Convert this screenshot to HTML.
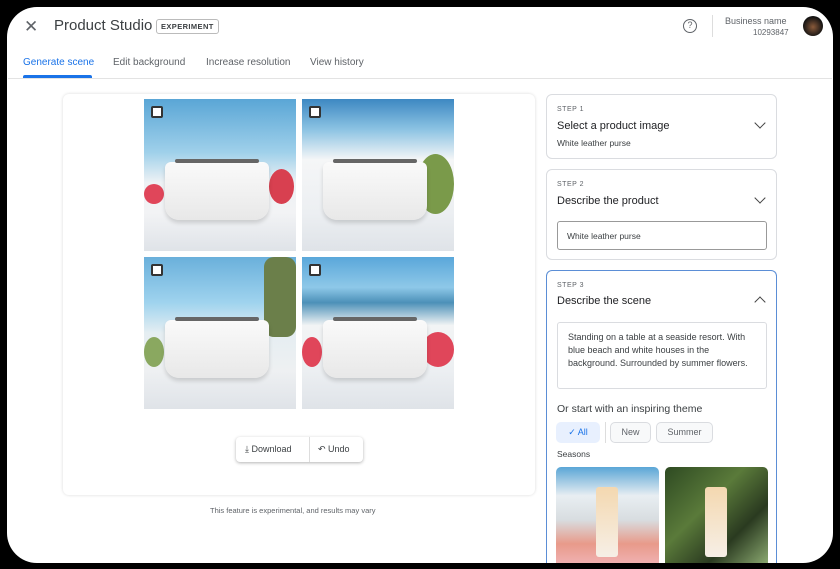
<!DOCTYPE html>
<html><head><style>
*{box-sizing:border-box;margin:0;padding:0}
html,body{width:840px;height:569px;overflow:hidden}
body{background:#000;font-family:"Liberation Sans",Arial,sans-serif;position:relative}
.scr{position:absolute;left:7px;top:7px;width:826px;height:556px;background:#fff;border-radius:30px;overflow:hidden}
.a{position:absolute}
.tab{position:absolute;top:57px;font-size:10px;color:#5f6368}
.tile{position:absolute;width:152px;height:152px;overflow:hidden;background:linear-gradient(#5aa6d6 0%,#9fd0ea 35%,#eef2f5 55%,#f2f3f5 75%,#dfe3e8 100%)}
.purse{position:absolute;left:21px;top:63px;width:104px;height:58px;background:linear-gradient(#fafafa,#e8e8e8);border-radius:6px 6px 14px 14px;box-shadow:0 3px 4px rgba(0,0,0,.15)}
.purse:before{content:"";position:absolute;left:10px;right:10px;top:-3px;height:4px;background:#666;border-radius:2px}
.cb{position:absolute;left:7px;top:7px;width:12px;height:12px;border:2px solid #333;background:#fff;border-radius:2px}
.fl{position:absolute;border-radius:50%;background:#e0465a}
.card{position:absolute;left:546px;width:231px;border:1px solid #dadce0;border-radius:6px;background:#fff}
.step{position:absolute;left:10px;font-size:7px;letter-spacing:.5px;color:#5f6368}
.ttl{position:absolute;left:10px;font-size:11px;color:#202124}
.chev{position:absolute;right:12px;width:8px;height:8px;border-right:1.5px solid #444;border-bottom:1.5px solid #444}
.chip{position:absolute;top:422px;height:21px;border:1px solid #dadce0;border-radius:5px;font-size:9px;color:#5f6368;text-align:center;line-height:19px;background:#f8f9fa}
</style></head><body>
<div class="scr"></div>
<div class="a" style="left:24px;top:17px;font-size:17px;color:#5f6368">✕</div>
<div class="a" style="left:54px;top:17px;font-size:15px;color:#3c4043">Product Studio</div>
<div class="a" style="left:156px;top:19px;border:1px solid #bbb;border-radius:3px;font-size:7.5px;font-weight:bold;padding:2px 4px;color:#3c4043;letter-spacing:.4px">EXPERIMENT</div>
<div class="tab" style="left:23px;color:#1a73e8">Generate scene</div>
<div class="tab" style="left:113px">Edit background</div>
<div class="tab" style="left:206px">Increase resolution</div>
<div class="tab" style="left:310px">View history</div>
<div class="a" style="left:23px;top:75px;width:69px;height:3px;background:#1a73e8;border-radius:2px 2px 0 0"></div>
<div class="a" style="left:8px;top:78px;width:824px;height:1px;background:#e3e3e3"></div>
<div class="a" style="left:683px;top:19px;width:14px;height:14px;border:1.5px solid #5f6368;border-radius:50%;font-size:9px;text-align:center;line-height:11px;color:#5f6368">?</div>
<div class="a" style="left:712px;top:15px;width:1px;height:22px;background:#ddd"></div>
<div class="a" style="left:725px;top:16px;font-size:9px;color:#5f6368">Business name</div>
<div class="a" style="left:753px;top:28px;font-size:8px;color:#5f6368">10293847</div>
<div class="a" style="left:803px;top:16px;width:20px;height:20px;border-radius:50%;background:radial-gradient(circle at 50% 55%,#8a5a3a 0,#3a2a20 45%,#111 70%)"></div>

<div class="a" style="left:63px;top:94px;width:472px;height:401px;border-radius:6px;box-shadow:0 0 3px rgba(0,0,0,.15)"></div>
<div class="tile" style="left:144px;top:99px"><div class="fl" style="left:0;top:85px;width:20px;height:20px"></div><div class="fl" style="left:125px;top:70px;width:25px;height:35px;background:#d84050"></div><div class="purse"></div><div class="cb"></div></div>
<div class="tile" style="left:302px;top:99px;background:linear-gradient(#3d88c2 0%,#8cc3e3 20%,#f5f6f7 40%,#eceff2 75%,#dfe3e8 100%)"><div class="fl" style="left:115px;top:55px;width:37px;height:60px;background:#7a9a4a"></div><div class="purse"></div><div class="cb"></div></div>
<div class="tile" style="left:144px;top:257px;background:linear-gradient(#6ab0db 0%,#9fd3ee 30%,#e5eef2 50%,#eef0f2 75%,#dfe3e8 100%)"><div class="fl" style="left:0;top:80px;width:20px;height:30px;background:#8aa860"></div><div class="fl" style="left:120px;top:0;width:32px;height:80px;background:#6b7f4a;border-radius:10px"></div><div class="purse"></div><div class="cb"></div></div>
<div class="tile" style="left:302px;top:257px;background:linear-gradient(#5aa7da 0%,#8ec8e8 20%,#4c90b8 30%,#f2f4f5 45%,#eceff2 75%,#dfe3e8 100%)"><div class="fl" style="left:0;top:80px;width:20px;height:30px"></div><div class="fl" style="left:120px;top:75px;width:32px;height:35px"></div><div class="purse"></div><div class="cb"></div></div>

<div class="a" style="left:236px;top:437px;width:127px;height:25px;border-radius:4px;box-shadow:0 1px 3px rgba(0,0,0,.3);background:#fff;font-size:9px;color:#3c4043">
<span class="a" style="left:9px;top:7px">⤓ Download</span><span class="a" style="left:73px;top:0;width:1px;height:25px;background:#ddd"></span><span class="a" style="left:82px;top:7px">↶ Undo</span></div>
<div class="a" style="left:210px;top:506px;font-size:7.5px;color:#5f6368">This feature is experimental, and results may vary</div>

<div class="card" style="top:94px;height:65px"><div class="step" style="top:11px">STEP 1</div><div class="ttl" style="top:25px">Select a product image</div><div class="chev" style="top:24px;transform:rotate(45deg)"></div><div class="a" style="left:10px;top:43px;font-size:8.5px;color:#3c4043">White leather purse</div></div>
<div class="card" style="top:169px;height:91px"><div class="step" style="top:11px">STEP 2</div><div class="ttl" style="top:25px">Describe the product</div><div class="chev" style="top:24px;transform:rotate(45deg)"></div><div class="a" style="left:10px;top:51px;width:210px;height:29px;border:1px solid #999;border-radius:3px;font-size:8.5px;color:#3c4043;padding:9px 0 0 9px">White leather purse</div></div>
<div class="card" style="top:270px;height:293px;border:1.5px solid #5b8ed6;border-bottom:none;border-radius:6px 6px 0 0"><div class="step" style="top:11px">STEP 3</div><div class="ttl" style="top:24px">Describe the scene</div><div class="chev" style="top:27px;transform:rotate(-135deg)"></div>
<div class="a" style="left:10px;top:51px;width:210px;height:67px;border:1px solid #dadce0;border-radius:3px;font-size:9px;line-height:13px;color:#3c4043;padding:8px 8px 0 10px">Standing on a table at a seaside resort. With blue beach and white houses in the background. Surrounded by summer flowers.</div>
<div class="a" style="left:10px;top:132px;font-size:10.5px;color:#3c4043">Or start with an inspiring theme</div>
<div class="a" style="left:10px;top:178px;font-size:8.5px;color:#3c4043">Seasons</div>
</div>
<div class="chip" style="left:556px;width:44px;background:#e8f0fe;border-color:#e8f0fe;color:#1a73e8">✓ All</div>
<div class="a" style="left:605px;top:422px;width:1px;height:21px;background:#ddd"></div>
<div class="chip" style="left:610px;width:41px">New</div>
<div class="chip" style="left:656px;width:57px">Summer</div>
<div class="a" style="left:556px;top:467px;width:103px;height:96px;border-radius:5px 5px 0 0;background:linear-gradient(#5aa6d6 0%,#e8eef2 30%,#d8dde0 55%,#e89a8a 80%,#f0b0b0 100%)"><div class="a" style="left:40px;top:20px;width:22px;height:70px;background:linear-gradient(#f4d8b0,#f6efe6);border-radius:3px"></div></div>
<div class="a" style="left:665px;top:467px;width:103px;height:96px;border-radius:5px 5px 0 0;background:linear-gradient(135deg,#2e4a22 0%,#5a7a3a 40%,#2a3a20 70%,#8aa870 100%)"><div class="a" style="left:40px;top:20px;width:22px;height:70px;background:linear-gradient(#f4d8b0,#f6efe6);border-radius:3px"></div></div>
<div class="a" style="left:0;top:563px;width:840px;height:20px;background:#000"></div>
<div class="a" style="left:833px;top:0;width:7px;height:569px;background:#000"></div>
</body></html>
